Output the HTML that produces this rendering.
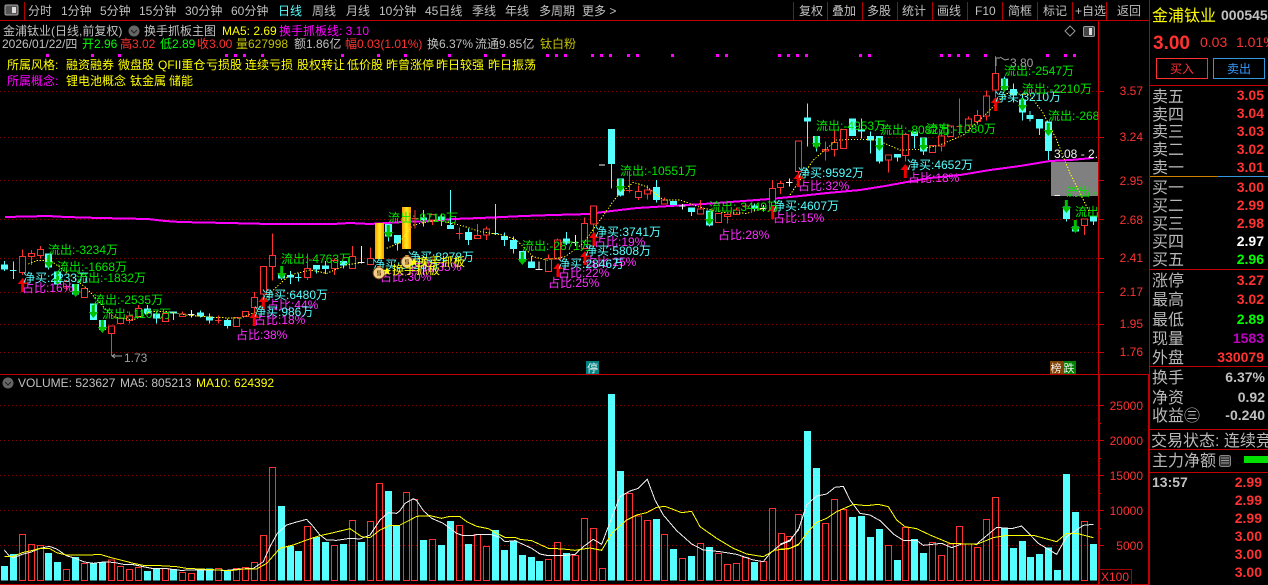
<!DOCTYPE html>
<html><head><meta charset="utf-8"><title>金浦钛业</title>
<style>
html,body{margin:0;padding:0;background:#000;width:1268px;height:585px;overflow:hidden}
svg{display:block}
text{font-family:"Liberation Sans","WenQuanYi Zen Hei","Noto Sans CJK SC",sans-serif;font-size:12px;fill:#c0c0c0;white-space:pre}
.c{fill:#55ffff}.gr{fill:#00e600}.gb{fill:#00ff00}.m{fill:#ff32ff}.mm{fill:#ff00ff}.y{fill:#ffff00}.r{fill:#ff3232}.dy{fill:#c0c000}.w{fill:#f0f0f0}
.l{font-size:16px;fill:#b8b8b8}
.v{font-size:14px;font-weight:bold;text-anchor:end}
.ax{fill:#ff3232;text-anchor:end}
</style></head><body>
<svg width="1268" height="585" viewBox="0 0 1268 585" xmlns="http://www.w3.org/2000/svg">
<defs>
<clipPath id="mc"><rect x="0" y="24" width="1098" height="350"/></clipPath>
<linearGradient id="gold" x1="0" x2="1" y1="0" y2="0"><stop offset="0" stop-color="#ff9a00"/><stop offset=".5" stop-color="#ffee20"/><stop offset="1" stop-color="#ff9a00"/></linearGradient>
<g id="da"><path d="M-1.5 0h3v7h3.5L0 13-4.5 7H-1.5z" fill="#00c000"/></g>
<g id="ua"><path d="M0 0 5 6H1.5v8h-3V6H-5z" fill="#f00000"/></g>
<g id="bag"><circle cx="0" cy="1" r="6" fill="#f2cf88" stroke="#5a3a10"/><path d="M-2-6h4l-1 2h-2z" fill="#c89040"/><path d="M2-1H-1.5V1H1.5V3H-2" fill="none" stroke="#7a4a10"/></g>
<g id="star"><path d="M0-4 1.2-1.2 4-1 1.8.8 2.6 4 0 2.2-2.6 4-1.8.8-4-1-1.2-1.2z" fill="#ffff00"/></g>
</defs>
<rect width="1268" height="585" fill="#000"/>

<!-- toolbar -->
<rect x="5" y="5" width="13" height="10" rx="1.5" fill="#555" stroke="#aaa"/><rect x="12" y="7" width="4" height="6" fill="#ddd"/>
<path d="M24.500 2V21M793.500 2V21M827.500 2V21M862.500 2V21M897.500 2V21M932.500 2V21M967.500 2V21M1002.500 2V21M1037.500 2V21M1072.500 2V21M1106.500 2V21" stroke="#b00000"/>
<rect x="0" y="20" width="1149" height="1" fill="#c00000"/>
<g>
<text x="28" y="15">分时</text><text x="61" y="15">1分钟</text><text x="100" y="15">5分钟</text><text x="139" y="15">15分钟</text><text x="185" y="15">30分钟</text><text x="231" y="15">60分钟</text><text x="278" y="15" class="c">日线</text><text x="312" y="15">周线</text><text x="346" y="15">月线</text><text x="379" y="15">10分钟</text><text x="425" y="15">45日线</text><text x="472" y="15">季线</text><text x="505" y="15">年线</text><text x="539" y="15">多周期</text><text x="582" y="15">更多 &gt;</text>
<text x="799" y="15">复权</text><text x="832" y="15">叠加</text><text x="867" y="15">多股</text><text x="902" y="15">统计</text><text x="937" y="15">画线</text><text x="975" y="15">F10</text><text x="1008" y="15">简框</text><text x="1043" y="15">标记</text><text x="1075" y="15">+自选</text><text x="1117" y="15">返回</text>
</g>

<!-- header rows -->
<text x="3" y="35">金浦钛业(日线,前复权)</text>
<circle cx="134" cy="31" r="5.500" fill="#666"/><path d="M131 30l3 3 3-3" stroke="#222" fill="none"/>
<text x="144" y="35">换手抓板主图</text><text x="222" y="35" class="y">MA5: 2.69</text><text x="279" y="35" class="mm">换手抓板线: 3.10</text>
<text x="2" y="48">2026/01/22/四</text>
<text x="82" y="48" class="gb">开2.96</text><text x="120" y="48" class="r">高3.02</text><text x="160" y="48" class="gb">低2.89</text><text x="197" y="48" class="r">收3.00</text><text x="236" y="48" class="dy">量627998</text><text x="294" y="48">额1.86亿</text><text x="345" y="48" class="r">幅0.03(1.01%)</text><text x="427" y="48">换6.37%</text><text x="475" y="48">流通9.85亿</text><text x="540" y="48" class="dy">钛白粉</text>
<path fill="#ff00ff" d="M46 54h3v3h-3zM91 54h3v3h-3zM118 54h3v3h-3zM225 54h3v3h-3zM234 54h3v3h-3zM243 54h3v3h-3zM261 54h3v3h-3zM341 54h3v3h-3zM377 54h3v3h-3zM404 54h3v3h-3zM448 54h3v3h-3zM484 54h3v3h-3zM502 54h3v3h-3zM546 54h3v3h-3zM555 54h3v3h-3zM564 54h3v3h-3zM591 54h3v3h-3zM600 54h3v3h-3zM609 54h3v3h-3zM627 54h3v3h-3zM636 54h3v3h-3zM671 54h3v3h-3zM716 54h3v3h-3zM725 54h3v3h-3zM778 54h3v3h-3zM787 54h3v3h-3zM796 54h3v3h-3zM805 54h3v3h-3zM859 54h3v3h-3zM868 54h3v3h-3zM940 54h3v3h-3zM948 54h3v3h-3zM957 54h3v3h-3zM966 54h3v3h-3zM984 54h3v3h-3zM1046 54h3v3h-3zM1064 54h3v3h-3zM1073 54h3v3h-3z"/>
<g class="y">
<text x="7" y="69" class="y">所属风格:</text><text x="66" y="69" class="y">融资融券</text><text x="118" y="69" class="y">微盘股</text><text x="158" y="69" class="y">QFII重仓</text><text x="206" y="69" class="y">亏损股</text><text x="245" y="69" class="y">连续亏损</text><text x="297" y="69" class="y">股权转让</text><text x="347" y="69" class="y">低价股</text><text x="386" y="69" class="y">昨曾涨停</text><text x="436" y="69" class="y">昨日较强</text><text x="488" y="69" class="y">昨日振荡</text>
<text x="7" y="85" class="mm">所属概念:</text><text x="66" y="85" class="y">锂电池概念</text><text x="130" y="85" class="y">钛金属</text><text x="169" y="85" class="y">储能</text>
</g>
<path d="M1070 26l5 5-5 5-5-5z" fill="none" stroke="#999"/>
<rect x="1083.500" y="26.500" width="11" height="10" rx="1.500" fill="#444" stroke="#999"/><rect x="1089" y="28" width="3" height="7" fill="#ddd"/>

<!-- grids -->
<path d="M0 91.500H1098M0 137.500H1098M0 180.500H1098M0 219.500H1098M0 258.500H1098M0 292.500H1098M0 324.500H1098M0 352.500H1098M0 405.500H1098M0 440.500H1098M0 475.500H1098M0 510.500H1098M0 545.500H1098" stroke="#8a0000" stroke-dasharray="1 3"/>

<g clip-path="url(#mc)">
<!-- MA magenta -->
<polyline shape-rendering="crispEdges" fill="none" stroke="#ff00ff" stroke-width="2" points="5,217 48,216 66,217 100,218 148,219 165,221 180,222 227,223 270,224 333,224 350,223 370,224 403,222 430,221 453,219 480,218 503,217 523,216 553,215 590,214 603,212 637,208 670,206 703,204 730,202 770,199 800,196 827,193 860,190 885,186 907,182 930,178 960,175 990,170 1020,166 1050,161 1070,160 1093,158"/>
<rect x="1051" y="162" width="47" height="34" fill="#808080"/>

<g shape-rendering="crispEdges">
<!-- zoom3 candles -->
<g transform="translate(0,190) scale(.33333)">
<path stroke="#55ffff" stroke-width="3" fill="none" d="M13 213V243M40 215V267M146 190V238M173 245V285M227 282V315M280 340V390M307 390V427M442 345V372M469 365V400M520 365V390M601 362V382M628 370V400M682 385V415M845 228V270M872 243V282M895 250V275M949 225V250M976 213V252M1030 213V235M30 241H50M885 263H905"/>
<path stroke="#55ffff" stroke-width="21" fill="none" d="M13 224V238M146 190V232M173 245V283M227 282V313M280 340V390M307 390V420M442 355V370M469 370V385M520 365V370M601 368V380M628 380V392M682 390V408M845 250V265M872 255V262M949 225V238M976 227V237M1030 213V226"/>
<path stroke="#f0f0f0" stroke-width="3" fill="none" d="M564 373H584M574 360V382M1074 218H1094M1084 168V220"/>
<path stroke="#ff3232" stroke-width="3" fill="none" d="M645 392H665M655 376V400M67 178V255M94 180V225M121 168V205M200 270V300M334 430V498M388 365V400M415 345V380M547 365V380M763 306V385M790 312V345M817 130V272M922 190V270M1003 206V255M1057 168V236M1111 172V224"/>
<path stroke="#ff3232" stroke-width="3" fill="#000" d="M58 199h18v48h-18zM85 190h18v10h-18zM112 178h18v18h-18zM191 275h18v15h-18zM244 295h18v28h-18zM325 408h18v22h-18zM352 385h18v15h-18zM379 378h18v14h-18zM406 355h18v25h-18zM487 370h18v25h-18zM538 372h18v8h-18zM700 382h18v28h-18zM727 364h18v16h-18zM754 322h18v30h-18zM781 229h18v83h-18zM808 196h18v34h-18zM913 235h18v27h-18zM994 212h18v24h-18zM1048 199h18v37h-18zM1102 205h18v19h-18z"/>
</g>
<!-- zoom4 candles -->
<g transform="translate(370,120) scale(.33333)">
<path stroke="#55ffff" stroke-width="3" fill="none" d="M55 312V365M82 345V392M160 270V320M214 280V318M241 210V325M295 325V375M376 252V345M403 337V378M430 350V400M457 393V430M484 408V444M590 336V375M724 132V205M751 175V230M859 180V247M910 243V255M964 262V288M1018 272V320M1153 250V275M366 341H386"/>
<path stroke="#55ffff" stroke-width="21" fill="none" d="M55 312V350M82 345V370M160 292V300M214 290V300M241 315V327M295 336V360M403 348V360M430 360V387M457 393V425M484 424V444M590 355V370M724 27V132M751 175V227M859 201V240M910 243V255M964 262V276M1018 272V317M1153 257V267"/>
<path stroke="#f0f0f0" stroke-width="3" fill="none" d="M507 425V450M497 449H517M616 345V378M606 368H626M687 135H705M937 252V268M927 258H947M1180 255V275M1170 265H1190"/>
<path stroke="#ff3232" stroke-width="3" fill="none" d="M258 340H278M268 322V358M125 295H145M135 270V325M768 212H788M778 165V218M1116 258H1136M1126 250V265M187 283V315M322 312V346M349 320V360M535 403V415M562 355V417M643 292V310M670 258V340M805 196V240M832 195V238M883 232V240M991 240V267M1072 290V310M1099 262V270"/>
<path stroke="#ff3232" stroke-width="3" fill="#000" d="M178 283h18v17h-18zM313 346h18v10h-18zM340 327h18v18h-18zM526 415h18v40h-18zM553 360h18v57h-18zM634 310h18v75h-18zM661 258h18v54h-18zM796 214h18v18h-18zM823 210h18v12h-18zM874 240h18v12h-18zM982 267h18v15h-18zM1036 280h18v28h-18zM1063 283h18v7h-18zM1090 270h18v13h-18z"/>
</g>
<!-- zoom5 candles -->
<g transform="translate(760,50) scale(.33333)">
<path stroke="#ff3232" stroke-width="3" fill="none" d="M37 390V475M61 393V432M115 365V405M196 275V332M223 240V320M385 330V367M436 317V335M517 285V308M544 240V305M598 145V255M652 180V225M679 122V212M706 18V150M625 200V230M973 527V555M589 230H607"/>
<path stroke="#ff3232" stroke-width="3" fill="#000" d="M28 415h18v60h-18zM52 400h18v13h-18zM106 273h18v92h-18zM187 298h18v5h-18zM214 278h18v20h-18zM241 238h18v57h-18zM376 315h18v15h-18zM427 253h18v64h-18zM508 286h18v22h-18zM535 258h18v30h-18zM562 228h18v32h-18zM616 207h18v18h-18zM643 196h18v19h-18zM670 138h18v60h-18zM697 70h18v50h-18zM964 507h18v20h-18z"/>
<path stroke="#f0f0f0" stroke-width="3" fill="none" d="M78 398H98M88 385V410M883 437H900"/>
<path stroke="#55ffff" stroke-width="3" fill="none" d="M142 160V290M169 258V305M304 205V265M331 245V310M358 258V340M412 312V335M463 245V295M490 263V315M733 80V125M760 100V158M787 130V212M810 183V215M838 207V255M865 215V330M919 450V515M946 510V548M1000 500V525"/>
<path stroke="#55ffff" stroke-width="21" fill="none" d="M142 203V215M169 258V290M277 205V258M304 238V245M331 258V272M358 258V335M412 312V323M463 245V258M490 263V305M733 85V120M760 117V137M787 148V188M810 195V207M838 207V235M865 215V303M919 470V507M946 530V545M1000 500V515"/>
</g>
</g>
<!-- gold bars -->
<rect x="375" y="223" width="9" height="36" fill="url(#gold)"/>
<rect x="402" y="207" width="9" height="42" fill="url(#gold)"/>

<!-- yellow dashed MA -->
<g fill="none" stroke="#ffff00" stroke-dasharray="4 5" stroke-width="3" shape-rendering="crispEdges">
<polyline transform="translate(0,190) scale(.33333)" points="85,222 110,212 150,210 190,240 215,260 260,295 310,350 340,380 400,390 450,365 500,365 560,375 640,382 720,385 770,365 810,310 830,290 870,255 930,240 980,250 1040,225 1080,218"/>
<polyline transform="translate(370,120) scale(.33333)" points="50,385 85,370 130,315 200,300 280,318 330,335 400,345 440,360 490,410 530,420 585,410 640,370 690,300 740,230 790,187 830,200 880,240 930,240 990,262 1060,278 1130,280 1180,265"/>
<polyline transform="translate(760,50) scale(.33333)" points="90,435 160,330 230,270 290,268 350,270 420,300 480,298 540,285 610,255 680,190 740,130 810,135 850,190 890,270 930,370 960,430 990,490"/>
</g>

<!-- arrows -->
<use href="#da" x="48.700" y="255"/><use href="#da" x="57.700" y="272"/><use href="#da" x="75.700" y="284"/><use href="#da" x="93.300" y="305"/><use href="#da" x="102.300" y="320"/><use href="#da" x="281.700" y="266"/><use href="#da" x="388.300" y="225"/><use href="#da" x="522.300" y="252"/><use href="#da" x="620.300" y="179"/><use href="#da" x="709.300" y="212"/><use href="#da" x="816.300" y="136"/><use href="#da" x="879.300" y="138"/><use href="#da" x="923.300" y="138"/><use href="#da" x="1004.300" y="79"/><use href="#da" x="1022.300" y="98"/><use href="#da" x="1048.300" y="123"/><use href="#da" x="1066.300" y="200"/><use href="#da" x="1075.300" y="220"/>
<use href="#ua" x="22.700" y="278"/><use href="#ua" x="263.300" y="296"/><use href="#ua" x="254.300" y="312"/><use href="#ua" x="558" y="263"/><use href="#ua" x="585" y="251"/><use href="#ua" x="594" y="232"/><use href="#ua" x="772.700" y="205"/><use href="#ua" x="798.300" y="173"/><use href="#ua" x="905.300" y="164"/><use href="#ua" x="995.700" y="97"/>

<!-- annotations -->
<text x="48" y="254" class="gr">流出:-3234万</text>
<text x="57" y="271" class="gr">流出:-1668万</text>
<text x="23" y="282" class="c">净买:2233万</text>
<text x="76" y="282" class="gr">流出:-1832万</text>
<text x="22" y="292" class="m">占比:16%</text>
<text x="93" y="304" class="gr">流出:-2535万</text>
<text x="102" y="318" class="gr">流出:-1107万</text>
<text x="281" y="263" class="gr">流出:-4763万</text>
<text x="262" y="299" class="c">净买:6480万</text>
<text x="267" y="309" class="m">占比:44%</text>
<text x="254" y="316" class="c">净买:986万</text>
<text x="254" y="324" class="m">占比:18%</text>
<text x="236" y="339" class="m">占比:38%</text>
<path d="M112 356H122M112 356l3-2M112 356l3 2" stroke="#a0a0a0" fill="none"/>
<text x="124" y="362" style="fill:#a0a0a0">1.73</text>
<text x="388" y="222" class="gr">流出:-8710万</text>
<text x="408" y="261" class="c">净买:8278万</text>
<text x="373" y="269" class="c">净买:5023万</text>
<text x="380" y="281" class="m">占比:30%</text>
<text x="410" y="271" class="m">占比:35%</text>
<use href="#bag" x="379" y="272"/><use href="#star" x="387" y="271"/>
<use href="#bag" x="407" y="261"/><use href="#star" x="414" y="262"/>
<text x="392" y="274" class="y">换手抓板</text>
<text x="417" y="266" class="y">换手抓板</text>
<text x="522" y="250" class="gr">流出:-2871万</text>
<text x="595" y="236" class="c">净买:3741万</text>
<text x="594" y="246" class="m">占比:19%</text>
<text x="585" y="255" class="c">净买:5808万</text>
<text x="585" y="266" class="m">占比:25%</text>
<text x="558" y="268" class="c">净买:2846万</text>
<text x="558" y="277" class="m">占比:22%</text>
<text x="548" y="287" class="m">占比:25%</text>
<text x="620" y="175" class="gr">流出:-10551万</text>
<text x="709" y="211" class="gr">流出:-3449万</text>
<text x="718" y="239" class="m">占比:28%</text>
<text x="816" y="130" class="gr">流出:-4953万</text>
<text x="880" y="134" class="gr">流出:-8082万</text>
<text x="926" y="133" class="gr">流出:-1080万</text>
<text x="798" y="177" class="c">净买:9592万</text>
<text x="798" y="190" class="m">占比:32%</text>
<text x="907" y="169" class="c">净买:4652万</text>
<text x="908" y="182" class="m">占比:18%</text>
<text x="773" y="210" class="c">净买:4607万</text>
<text x="773" y="222" class="m">占比:15%</text>
<path d="M996 66V58H1000M1000 57l5 3 4-1" stroke="#a0a0a0" fill="none"/>
<text x="1010" y="67" style="fill:#a0a0a0">3.80</text>
<text x="1004" y="75" class="gr">流出:-2547万</text>
<text x="995" y="101" class="c">净买:3210万</text>
<text x="1022" y="93" class="gr">流出:-2210万</text>
<text x="1048" y="120" class="gr">流出:-268万</text>
<text x="1054" y="158" class="w">3.08 - 2.96</text>
<text x="1066" y="196" class="gr">流出:-1835万</text>
<text x="1075" y="216" class="gr">流出:-820万</text>
</g>

<!-- badges -->
<rect x="586" y="361" width="13" height="13" fill="#008080"/><text x="587" y="372" class="w" style="font-size:11px">停</text>
<rect x="1050" y="361" width="13" height="13" fill="#804000"/><rect x="1063" y="361" width="13" height="13" fill="#008000"/>
<text x="1050.500" y="372" class="w" style="font-size:11px">榜</text><text x="1063.500" y="372" class="w" style="font-size:11px">跌</text>

<!-- volume header -->
<rect x="0" y="374" width="1149" height="1" fill="#c00000"/>
<circle cx="8" cy="383" r="5.500" fill="#666"/><path d="M5 382l3 3 3-3" stroke="#222" fill="none"/>
<text x="18" y="387">VOLUME: 523627</text><text x="120" y="387">MA5: 805213</text><text x="196" y="387" class="y">MA10: 624392</text>

<!-- volume bars -->
<g shape-rendering="crispEdges">
<g transform="translate(0,370) scale(.33333)">
<path stroke="#55ffff" stroke-width="21" fill="none" d="M13 588V632M40 552V632M146 549V632M173 576V632M227 561V632M280 580V632M307 576V632M442 603V632M469 597V632M520 597V632M601 601V632M628 595V632M682 603V632M844 408V632M871 528V632M895 543V632M949 501V632M976 516V632M1030 522V632M1084 516V632M1165 363V632M1189 468V632"/>
<path stroke="#ff3232" stroke-width="3" fill="none" d="M58 493h18V632H58zM85 523h18V632H85zM112 526h18V632H112zM190 598h18V632H190zM244 580h18V632H244zM325 570h18V632H325zM352 589h18V632H352zM379 598h18V632H379zM406 592h18V632H406zM487 595h18V632H487zM538 607h18V632H538zM565 610h18V632H565zM646 595h18V632H646zM700 595h18V632H700zM727 592h18V632H727zM754 577h18V632H754zM781 496h18V632H781zM808 292h18V632H808zM913 469h18V632H913zM994 526h18V632H994zM1048 451h18V632H1048zM1102 454h18V632H1102zM1129 340h18V632H1129z"/>
</g>
<g transform="translate(400,370) scale(.33333)">
<path stroke="#55ffff" stroke-width="21" fill="none" d="M70 510V632M124 525V632M151 453V632M205 522V632M286 480V632M313 540V632M340 512V632M367 555V632M394 561V632M418 573V632M499 549V632M634 72V632M661 303V632M769 447V632M820 537V632M874 558V632M928 531V632M1063 576V632"/>
<path stroke="#ff3232" stroke-width="3" fill="none" d="M10 367h18V632H10zM34 388h18V632H34zM88 508h18V632H88zM169 466h18V632H169zM223 494h18V632H223zM250 529h18V632H250zM436 568h18V632H436zM463 517h18V632H463zM517 556h18V632H517zM544 445h18V632H544zM571 475h18V632H571zM598 595h18V632H598zM679 370h18V632H679zM706 438h18V632H706zM733 451h18V632H733zM784 493h18V632H784zM838 565h18V632H838zM892 520h18V632H892zM946 550h18V632H946zM973 583h18V632H973zM1000 580h18V632H1000zM1027 562h18V632H1027zM1081 574h18V632H1081zM1108 415h18V632H1108z"/>
</g>
<g transform="translate(780,370) scale(.33333)">
<path stroke="#55ffff" stroke-width="21" fill="none" d="M82 183V632M109 294V632M217 441V632M244 438V632M271 501V632M298 477V632M352 570V632M403 507V632M430 549V632M673 472V632M700 534V632M727 513V632M751 561V632M778 552V632M805 532V632M832 600V632M859 312V632M886 426V632M940 522V632"/>
<path stroke="#ff3232" stroke-width="3" fill="none" d="M-4 490h18V632H-4zM19 499h18V632H19zM46 433h18V632H46zM127 460h18V632H127zM154 388h18V632H154zM181 418h18V632H181zM316 526h18V632H316zM367 472h18V632H367zM448 517h18V632H448zM475 556h18V632H475zM502 522h18V632H502zM529 469h18V632H529zM556 522h18V632H556zM583 532h18V632H583zM610 448h18V632H610zM637 382h18V632H637zM904 454h18V632H904z"/>
</g>
</g>
<!-- volume MAs -->
<g fill="none" stroke-width="3" shape-rendering="crispEdges">
<g transform="translate(0,370) scale(.33333)">
<polyline stroke="#f0f0f0" points="13,540 27,557 40,564 67,553 94,546 121,535 148,529 170,537 199,557 226,565 253,576 280,580 310,576 340,577 370,583 400,584 430,590 460,596 500,596 540,601 600,600 680,601 720,597 760,595 790,575 810,530 832,490 860,465 890,456 920,448 940,470 960,495 980,510 1010,511 1050,505 1080,507 1110,495 1140,450 1165,428 1190,430 1200,422"/>
<polyline stroke="#ffff00" points="13,559 40,559 67,548 94,542 121,535 148,535 170,548 199,555 270,555 300,553 330,562 370,572 400,580 430,586 480,587 530,590 560,595 620,598 690,602 730,597 770,597 800,580 840,535 880,525 920,510 960,497 1000,488 1050,476 1085,500 1110,503 1140,480 1170,466 1200,466"/>
</g>
<g transform="translate(400,370) scale(.33333)">
<polyline stroke="#f0f0f0" points="0,422 15,400 40,386 50,392 70,422 95,445 130,460 170,490 190,497 215,497 235,493 270,493 300,502 315,515 345,512 395,535 420,552 445,557 490,557 525,553 550,530 580,508 605,523 625,470 640,430 660,380 690,363 715,355 742,328 765,390 790,435 830,482 875,522 910,540 960,545 1010,553 1060,570 1090,575 1110,550 1140,525 1170,513 1200,470"/>
<polyline stroke="#ffff00" points="0,465 30,450 50,439 90,437 125,445 150,439 180,440 200,455 230,469 265,476 290,490 315,502 345,502 360,508 395,512 445,535 490,537 525,541 570,534 605,541 635,490 680,450 710,435 740,428 770,412 795,409 845,428 875,424 900,470 950,505 1000,535 1040,552 1090,560 1125,540 1165,537 1200,520"/>
</g>
<g transform="translate(780,370) scale(.33333)">
<polyline stroke="#f0f0f0" points="0,523 30,510 55,480 80,405 110,378 140,372 165,352 190,349 210,390 240,430 270,435 300,452 340,492 370,511 410,511 430,526 485,520 515,533 545,522 590,522 650,472 695,476 725,468 775,520 830,553 860,500 910,466 940,463"/>
<polyline stroke="#ffff00" points="0,538 30,535 55,525 80,490 110,457 140,445 170,425 220,403 260,407 295,403 325,410 350,450 375,470 410,476 450,495 510,520 590,523 640,503 680,496 760,496 830,515 860,490 890,490 940,503"/>
</g>
</g>

<!-- axes -->
<rect x="1098" y="21" width="1" height="353" fill="#d00000"/>
<rect x="1098" y="374" width="2" height="211" fill="#c00000"/>
<rect x="0" y="584" width="1149" height="1" fill="#c00000"/>
<path stroke="#d00000" d="M1098 91.500h6M1098 137.500h6M1098 180.500h6M1098 219.500h6M1098 258.500h6M1098 292.500h6M1098 324.500h6M1098 352.500h6M1099 405.500h5M1099 440.500h5M1099 475.500h5M1099 510.500h5M1099 545.500h5M1099 423.500h2M1099 458.500h2M1099 493.500h2M1099 528.500h2"/>
<text x="1143" y="95" class="ax">3.57</text><text x="1143" y="141" class="ax">3.24</text><text x="1143" y="185" class="ax">2.95</text><text x="1143" y="224" class="ax">2.68</text><text x="1143" y="262" class="ax">2.41</text><text x="1143" y="296" class="ax">2.17</text><text x="1143" y="328" class="ax">1.95</text><text x="1143" y="356" class="ax">1.76</text>
<text x="1143" y="410" class="ax">25000</text><text x="1143" y="445" class="ax">20000</text><text x="1143" y="480" class="ax">15000</text><text x="1143" y="515" class="ax">10000</text><text x="1143" y="550" class="ax">5000</text>
<rect x="1099.500" y="569.500" width="32" height="15" fill="#000" stroke="#a00000"/><text x="1101" y="581" class="r">X100</text>

<!-- right panel -->
<rect x="1149" y="0" width="1" height="374" fill="#c00000"/>
<rect x="1148" y="374" width="2" height="211" fill="#c00000"/>
<text x="1152" y="21" class="y" style="font-size:16px">金浦钛业</text>
<text x="1221" y="20" style="font-size:14px;font-weight:bold">000545</text>
<text x="1153" y="49" class="r" style="font-size:19px;font-weight:bold">3.00</text>
<text x="1200" y="47" class="r" style="font-size:14px">0.03</text><text x="1236" y="47" class="r" style="font-size:14px">1.01%</text>
<rect x="1156.500" y="58.500" width="51" height="20" fill="none" stroke="#ff3232"/><text x="1170" y="73" class="r">买入</text>
<rect x="1213.500" y="58.500" width="51" height="20" fill="none" stroke="#3399dd"/><text x="1227" y="73" style="fill:#3399ff">卖出</text>
<rect x="1150" y="85" width="118" height="1" fill="#c00000"/>
<text x="1152" y="102" class="l">卖五</text><text x="1152" y="120" class="l">卖四</text><text x="1152" y="137" class="l">卖三</text><text x="1152" y="155" class="l">卖二</text><text x="1152" y="173" class="l">卖一</text>
<rect x="1150" y="176" width="67" height="1" fill="#d08000"/><rect x="1217" y="176" width="51" height="1" fill="#3399dd"/>
<text x="1152" y="193" class="l">买一</text><text x="1152" y="211" class="l">买二</text><text x="1152" y="229" class="l">买三</text><text x="1152" y="247" class="l">买四</text><text x="1152" y="265" class="l">买五</text>
<text x="1264" y="100" class="v r">3.05</text><text x="1264" y="118" class="v r">3.04</text><text x="1264" y="136" class="v r">3.03</text><text x="1264" y="154" class="v r">3.02</text><text x="1264" y="172" class="v r">3.01</text>
<text x="1264" y="192" class="v r">3.00</text><text x="1264" y="210" class="v r">2.99</text><text x="1264" y="228" class="v r">2.98</text><text x="1264" y="246" class="v" style="fill:#fff">2.97</text><text x="1264" y="264" class="v gb">2.96</text>
<rect x="1150" y="269" width="118" height="1" fill="#c00000"/>
<text x="1152" y="286" class="l">涨停</text><text x="1152" y="305" class="l">最高</text><text x="1152" y="325" class="l">最低</text><text x="1152" y="344" class="l">现量</text><text x="1152" y="363" class="l">外盘</text>
<text x="1264" y="285" class="v r">3.27</text><text x="1264" y="304" class="v r">3.02</text><text x="1264" y="324" class="v gb">2.89</text><text x="1264" y="343" class="v" style="fill:#c000c0">1583</text><text x="1264" y="362" class="v r">330079</text>
<rect x="1150" y="366" width="118" height="1" fill="#c00000"/>
<text x="1152" y="383" class="l">换手</text><text x="1152" y="403" class="l">净资</text><text x="1152" y="421" class="l">收益㊂</text>
<text x="1265" y="382" class="v">6.37%</text><text x="1265" y="402" class="v">0.92</text><text x="1265" y="420" class="v">-0.240</text>
<rect x="1150" y="429" width="118" height="1" fill="#c00000"/>
<text x="1151" y="446" class="l">交易状态: 连续竞价</text>
<rect x="1150" y="449" width="118" height="1" fill="#c00000"/>
<text x="1152" y="466" class="l">主力净额</text>
<rect x="1219.500" y="455.500" width="11" height="11" rx="2" fill="#333" stroke="#888"/><path d="M1221 458h8M1221 460.500h8M1221 463h8" stroke="#999"/>
<rect x="1244" y="456" width="24" height="7" fill="#00e000"/>
<rect x="1150" y="472" width="118" height="1" fill="#c00000"/>
<text x="1152" y="487" style="font-size:14px;font-weight:bold">13:57</text>
<text x="1262" y="487" class="v r">2.99</text><text x="1262" y="505" class="v r">2.99</text><text x="1262" y="523" class="v r">2.99</text><text x="1262" y="541" class="v r">3.00</text><text x="1262" y="559" class="v r">3.00</text><text x="1262" y="577" class="v r">3.00</text>
</svg>
</body></html>
